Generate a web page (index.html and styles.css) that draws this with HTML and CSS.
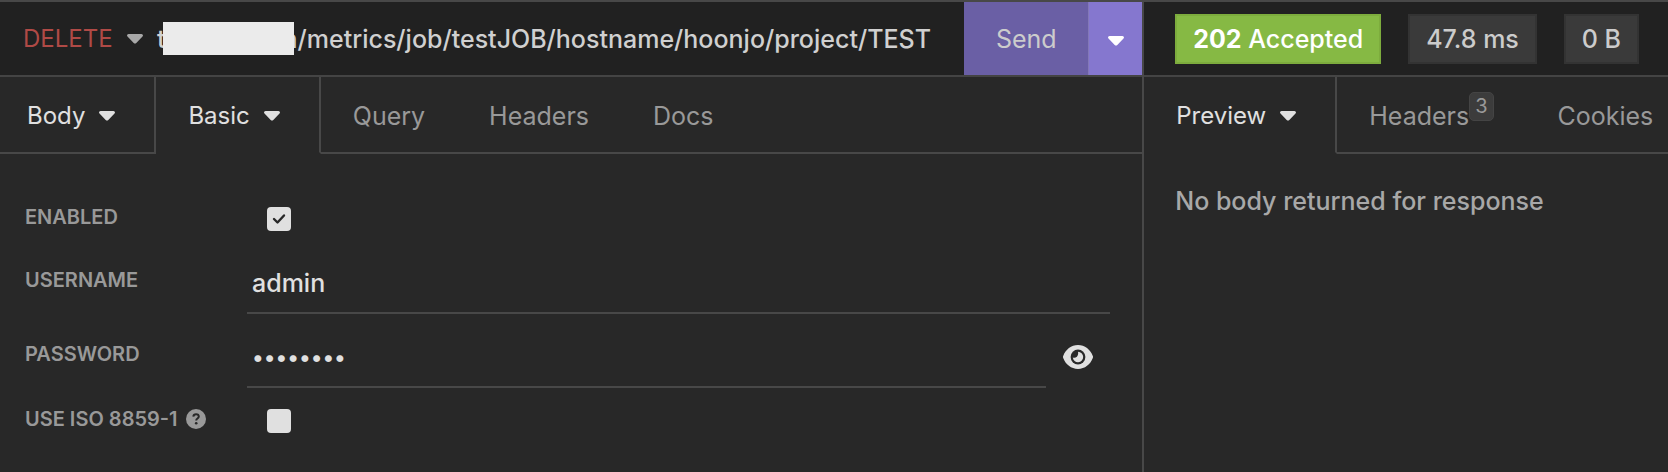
FILE: index.html
```html
<!DOCTYPE html>
<html lang="en">
<head>
    <meta charset="UTF-8">
    <meta name="viewport" content="width=device-width, initial-scale=1.0">
    <title>API Client</title>
    <link rel="stylesheet" href="styles.css">
</head>
<body>
    <svg class="symbols" aria-hidden="true">
        <symbol id="caret" viewBox="0 0 16 10">
            <path d="M1.6 0h12.8c1.4 0 2.1 1.6 1.1 2.6L9.3 8.9c-.7.7-1.9.7-2.6 0L.5 2.6C-.5 1.6.2 0 1.6 0z" fill="currentColor"/>
        </symbol>
    </svg>

    <main class="app">
        <section class="pane request">
            <form class="bar url-bar">
                <label class="method">
                    <select aria-label="Method">
                        <option>DELETE</option>
                    </select>
                    <svg class="caret"><use href="#caret"/></svg>
                </label>
                <div class="url">
                    <span>t</span>
                    <span class="redacted"></span>
                    <input type="text" aria-label="URL" value="n/metrics/job/testJOB/hostname/hoonjo/project/TEST">
                </div>
                <button type="button" class="send">Send</button>
                <button type="button" class="send-menu" aria-label="Send options">
                    <svg class="caret"><use href="#caret"/></svg>
                </button>
            </form>

            <nav class="tabs">
                <button type="button" class="tab menu first">Body <svg class="caret"><use href="#caret"/></svg></button>
                <button type="button" class="tab menu selected">Basic <svg class="caret"><use href="#caret"/></svg></button>
                <button type="button" class="tab">Query</button>
                <button type="button" class="tab">Headers</button>
                <button type="button" class="tab">Docs</button>
                <span class="tab-fill"></span>
            </nav>

            <form class="auth">
                <div class="row">
                    <label for="enabled">ENABLED</label>
                    <input type="checkbox" id="enabled" checked>
                </div>
                <div class="row field">
                    <label for="username">USERNAME</label>
                    <input type="text" id="username" value="admin">
                </div>
                <div class="row field">
                    <label for="password">PASSWORD</label>
                    <input type="password" id="password" value="password">
                    <button type="button" class="reveal" aria-label="Show password">
                        <svg viewBox="0 0 30 24">
                            <path d="M15 0C8.200 0 2.600 4.500.2 10.900c-.3.700-.3 1.500 0 2.200C2.600 19.500 8.200 24 15 24s12.400-4.500 14.800-10.900c.3-.7.3-1.500 0-2.200C27.400 4.500 21.800 0 15 0z" fill="#e0e0e0"/>
                            <circle cx="15" cy="12" r="7.400" fill="#282828"/>
                            <path d="M15 6.800a5.200 5.200 0 1 1-5.200 5.700c1.200.6 3 .4 4.100-.8 1.300-1.300 1.500-3.300 1.100-4.900z" fill="#e0e0e0"/>
                        </svg>
                    </button>
                </div>
                <div class="row">
                    <label for="iso">USE ISO 8859-1<svg class="help" viewBox="0 0 20 20">
                        <circle cx="10" cy="10" r="10" fill="#999"/>
                        <path d="M7.300 7.600C7.500 6 8.600 5.200 10 5.200c1.600 0 2.800 1 2.800 2.400 0 1.900-2.600 1.900-2.600 3.800" fill="none" stroke="#282828" stroke-width="2"/>
                        <circle cx="10.200" cy="14.200" r="1.300" fill="#282828"/>
                    </svg></label>
                    <input type="checkbox" id="iso">
                </div>
            </form>
        </section>

        <section class="pane response">
            <div class="bar status-bar">
                <span class="tag success"><strong>202</strong> Accepted</span>
                <span class="tag">47.8 ms</span>
                <span class="tag">0 B</span>
            </div>

            <nav class="tabs">
                <button type="button" class="tab menu selected">Preview <svg class="caret"><use href="#caret"/></svg></button>
                <button type="button" class="tab">Headers<span class="count">3</span></button>
                <button type="button" class="tab">Cookies</button>
                <span class="tab-fill"></span>
            </nav>

            <p class="empty">No body returned for response</p>
        </section>
    </main>
</body>
</html>
```

FILE: styles.css
```css
* {
    box-sizing: border-box;
}

body {
    margin: 0;
    font-family: Inter, "Liberation Sans", sans-serif;
    font-size: 25px;
    font-weight: 500;
    color: #e0e0e0;
    background-color: #282828;
}

button, input, select {
    margin: 0;
    padding: 0;
    border: 0;
    outline: 0;
    background: none;
    font: inherit;
    color: inherit;
}

.symbols {
    display: none;
}

.app {
    display: grid;
    grid-template-columns: 68.6% 1fr;
    min-height: 100vh;
    border-top: 2px solid #484848;
}

.pane {
    min-width: 0;
    overflow: hidden;
}

.request {
    border-right: 2px solid #484848;
}

.caret {
    width: 16px;
    height: 10px;
    flex: none;
}

/* Top bars */
.bar {
    display: flex;
    align-items: center;
    height: 75px;
    background-color: #212121;
    border-bottom: 2px solid #444;
}

.method {
    display: flex;
    align-items: center;
    gap: 14px;
    padding-left: 23px;
    font-size: 24px;
    font-weight: 400;
    color: #a8a8a8;
}

.method select {
    appearance: none;
    color: #b04a46;
}

.url {
    display: flex;
    align-items: center;
    flex: 1;
    min-width: 0;
    padding-left: 14px;
    color: #d0d0d0;
}

.redacted {
    position: relative;
    width: 131px;
    height: 33px;
    margin: 0 -11px 0 -3px;
    background-color: #ebebeb;
}

.url input {
    flex: 1;
    min-width: 0;
}

.send,
.send-menu {
    align-self: stretch;
    font-weight: 400;
}

.send {
    width: 124px;
    background-color: #6a5fa5;
    color: #ccc;
}

.send-menu {
    width: 54px;
    border-left: 1px solid #8378b8;
    background-color: #8577cf;
    color: #fff;
}

.send-menu .caret {
    vertical-align: middle;
}

/* Tabs */
.tabs {
    display: flex;
    height: 77px;
}

.tab {
    display: flex;
    flex: none;
    align-items: center;
    padding: 2px 32px 0;
    border-bottom: 2px solid #484848;
    font-weight: 400;
    color: #999;
}

.tab.menu {
    gap: 14px;
    padding-right: 39px;
    border-right: 2px solid #484848;
    font-size: 24px;
    color: #e0e0e0;
}

.tab.first {
    padding-left: 27px;
}

.tab.selected {
    border-bottom-color: transparent;
}

.tab-fill {
    flex: 1;
    border-bottom: 2px solid #484848;
}

.count {
    margin-bottom: 18px;
    padding: 0 5px;
    border: 1px solid #444;
    border-radius: 5px;
    background-color: #3c3c3c;
    font-size: 20px;
    line-height: 27px;
}

/* Auth form */
.auth {
    padding: 32px 32px 0 25px;
}

.row {
    display: flex;
    height: 54px;
    padding-top: 21px;
}

.row label {
    display: flex;
    flex: none;
    width: 222px;
    font-size: 20px;
    font-weight: 600;
    line-height: 20px;
    color: #999;
}

.row input[type="checkbox"] {
    appearance: none;
    width: 24px;
    height: 24px;
    margin-left: 20px;
    border-radius: 4px;
    background: #e0e0e0 center / 24px no-repeat;
}

.row input[type="checkbox"]:checked {
    background-image: url("data:image/svg+xml,%3Csvg xmlns='http://www.w3.org/2000/svg' viewBox='0 0 24 24'%3E%3Cpath d='M7 12l3.500 3.500L17 8.500' fill='none' stroke='%23282828' stroke-width='2.400' stroke-linecap='round' stroke-linejoin='round'/%3E%3C/svg%3E");
}

.row.field {
    height: 74px;
    padding-top: 14px;
}

.row.field label {
    padding-top: 16px;
}

.row.field input {
    flex: 1;
    min-width: 0;
    height: 60px;
    padding-left: 5px;
    border-bottom: 2px solid #484848;
}

.row.field input[type="password"] {
    font-size: 22px;
}

.reveal {
    display: flex;
    align-items: center;
    justify-content: center;
    width: 64px;
    height: 58px;
}

.reveal svg {
    width: 30px;
    height: 24px;
}

.help {
    width: 20px;
    height: 20px;
    margin-left: 8px;
}

/* Response */
.status-bar {
    gap: 27px;
    padding-left: 31px;
}

.tag {
    padding: 0 16px;
    border: 2px solid #333;
    background-color: #3a3a3a;
    line-height: 46px;
    white-space: nowrap;
    color: #ccc;
}

.tag.success {
    border-color: #7dac3d;
    background-color: #86b944;
    color: #fff;
}

.tag strong {
    font-weight: 700;
}

.empty {
    margin: 32px 31px;
    line-height: 30px;
    color: #a8a8a8;
}
```
